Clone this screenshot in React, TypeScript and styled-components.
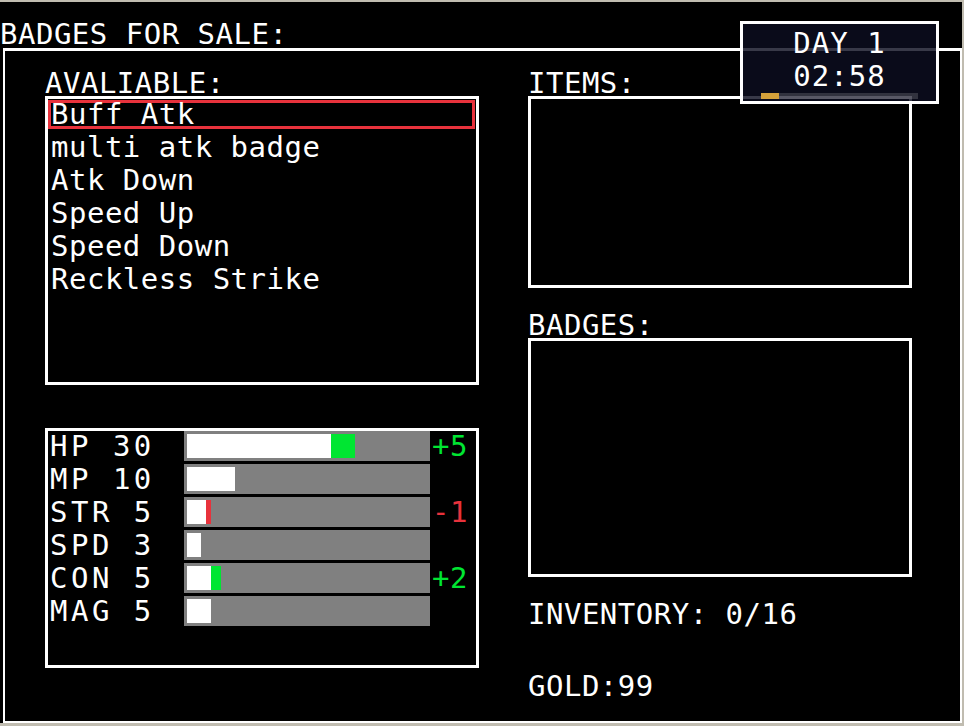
import React from "react";
import styled, { createGlobalStyle } from "styled-components";

const Global = createGlobalStyle`
  html, body {
    margin: 0;
    padding: 0;
    background: #c0bcb0;
    overflow: hidden;
  }
  #root {
    width: 964px;
    height: 726px;
  }
`;

const Screen = styled.div`
  position: relative;
  width: 962px;
  height: 721px;
  margin-top: 2px;
  box-sizing: border-box;
  padding-top: 19px;
  background: #000;
  color: #fff;
  font-family: "DejaVu Sans Mono", "Liberation Mono", monospace;
  font-size: 29px;
  letter-spacing: 0.5px;
  white-space: pre;
`;

const Title = styled.div`
  height: 27px;
  line-height: 27px;
`;

const Frame = styled.div`
  margin-left: 3px;
  height: 675px;
  box-sizing: border-box;
  border: 2px solid #fff;
  border-top-width: 3px;
  padding: 20px 0 0 40px;
  display: flex;
  gap: 49px;
`;

const Column = styled.div<{ $width: number }>`
  width: ${(p) => p.$width}px;
  display: flex;
  flex-direction: column;
`;

const Label = styled.div<{ $top?: number }>`
  height: 25px;
  line-height: 25px;
  margin-top: ${(p) => p.$top ?? 0}px;
`;

const Box = styled.div<{ $height: number }>`
  height: ${(p) => p.$height}px;
  box-sizing: border-box;
  border: 3px solid #fff;
`;

const ListBox = styled(Box)`
  padding: 1px 1px 0 0;
  display: flex;
  flex-direction: column;
  gap: 4px;
`;

const ListRow = styled.div<{ $selected?: boolean }>`
  height: 29px;
  box-sizing: border-box;
  border: 3px solid ${(p) => (p.$selected ? "#e8323c" : "transparent")};
  line-height: 23px;
`;

const StatsBox = styled(Box)`
  margin-top: 43px;
  display: flex;
  flex-direction: column;
  gap: 3px;
`;

const StatRow = styled.div`
  height: 30px;
  display: grid;
  grid-template-columns: 136px 246px 1fr;
`;

const StatLabel = styled.div`
  padding-left: 2px;
  line-height: 30px;
  letter-spacing: 3.5px;
`;

const Bar = styled.div`
  height: 30px;
  box-sizing: border-box;
  padding: 3px;
  background: #808080;
  display: flex;
`;

const Fill = styled.div<{ $color: string }>`
  height: 24px;
  background: ${(p) => p.$color};
`;

const Delta = styled.div<{ $color: string }>`
  padding-left: 2px;
  line-height: 30px;
  color: ${(p) => p.$color};
`;

const Timer = styled.div`
  position: absolute;
  left: 740px;
  top: 19px;
  width: 199px;
  height: 83px;
  box-sizing: border-box;
  border: 3px solid #fff;
  background: rgba(12, 13, 32, 0.82);
  padding-top: 3px;
  text-align: center;
  letter-spacing: 1px;
`;

const TimerLine = styled.div`
  height: 33px;
  line-height: 33px;
`;

const Track = styled.div`
  height: 6px;
  margin: 0 18px;
  background: rgba(255, 255, 255, 0.16);
`;

const TrackFill = styled.div<{ $width: number }>`
  width: ${(p) => p.$width}px;
  height: 6px;
  background: #d4a13a;
`;

const GREEN = "#00e632";
const RED = "#e8323c";
const SCALE = 4.8;

const items = [
  "Buff Atk",
  "multi atk badge",
  "Atk Down",
  "Speed Up",
  "Speed Down",
  "Reckless Strike",
];

type Stat = { name: string; value: number; delta: number };
const stats: Stat[] = [
  { name: "HP", value: 30, delta: 5 },
  { name: "MP", value: 10, delta: 0 },
  { name: "STR", value: 5, delta: -1 },
  { name: "SPD", value: 3, delta: 0 },
  { name: "CON", value: 5, delta: 2 },
  { name: "MAG", value: 5, delta: 0 },
];

function StatLine({ s }: { s: Stat }) {
  const label = `${s.name} ${s.value}`;
  const base = s.delta < 0 ? s.value + s.delta : s.value;
  const extra = Math.abs(s.delta);
  const deltaColor = s.delta > 0 ? GREEN : RED;
  return (
    <StatRow>
      <StatLabel>{label}</StatLabel>
      <Bar>
        <Fill $color="#fff" style={{ width: base * SCALE }} />
        {extra > 0 && <Fill $color={deltaColor} style={{ width: extra * SCALE }} />}
      </Bar>
      <Delta $color={deltaColor}>
        {s.delta > 0 ? `+${s.delta}` : s.delta < 0 ? `-${-s.delta}` : ""}
      </Delta>
    </StatRow>
  );
}

export default function App() {
  return (
    <>
      <Global />
      <Screen>
        <Title>BADGES FOR SALE:</Title>
        <Frame>
          <Column $width={434}>
            <Label>AVALIABLE:</Label>
            <ListBox $height={289}>
              {items.map((it, i) => (
                <ListRow key={it} $selected={i === 0}>
                  {it}
                </ListRow>
              ))}
            </ListBox>
            <StatsBox $height={240}>
              {stats.map((s) => (
                <StatLine key={s.name} s={s} />
              ))}
            </StatsBox>
          </Column>
          <Column $width={384}>
            <Label>ITEMS:</Label>
            <Box $height={192} />
            <Label $top={25}>BADGES:</Label>
            <Box $height={239} />
            <Label $top={25}>INVENTORY: 0/16</Label>
            <Label $top={47}>GOLD:99</Label>
          </Column>
        </Frame>
        <Timer>
          <TimerLine>DAY 1</TimerLine>
          <TimerLine>02:58</TimerLine>
          <Track>
            <TrackFill $width={18} />
          </Track>
        </Timer>
      </Screen>
    </>
  );
}
